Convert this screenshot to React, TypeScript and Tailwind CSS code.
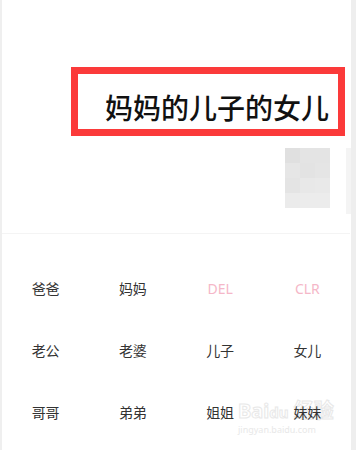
import React from 'react'

const KEYS: { label: string; accent?: boolean }[] = [
  { label: '爸爸' }, { label: '妈妈' }, { label: 'DEL', accent: true }, { label: 'CLR', accent: true },
  { label: '老公' }, { label: '老婆' }, { label: '儿子' }, { label: '女儿' },
  { label: '哥哥' }, { label: '弟弟' }, { label: '姐姐' }, { label: '妹妹' },
]

// blurred mosaic patch from the source screenshot
const MOSAIC = [
  '#e0e0e0', '#e4e4e4', '#e4e4e4',
  '#e6e6e6', '#e3e3e3', '#e5e5e5',
  '#e4e4e4', '#e8e8e8', '#e9e9e9',
  '#ebebeb', '#ececec', '#ececec',
]

export default function App() {
  return (
    <div
      className="flex w-[356px] h-[450px] bg-white overflow-hidden"
      style={{ fontFamily: '"Noto Sans", "Noto Sans CJK SC", sans-serif' }}
    >
      <div className="w-[2px] bg-[#efefef]" />
      <div className="flex-1 flex flex-col">
        {/* display */}
        <div className="h-[233px] pt-[67px] pl-[69px]">
          <div className="w-[274px] h-[69px] border-[7px] border-[#fb3a3a] flex items-end justify-end pr-[9px] pb-[1px]">
            <span className="text-[28px] leading-[40px] font-medium text-[#111]">妈妈的儿子的女儿</span>
          </div>
          <div className="flex mt-[12px] ml-[214px] items-start">
            <div className="grid grid-cols-3 w-[45px]">
              {MOSAIC.map((c, i) => (
                <div key={i} className="h-[15px]" style={{ backgroundColor: c }} />
              ))}
            </div>
            <div className="ml-[16px] w-[5px] h-[66px] bg-[#f4f4f4]" />
          </div>
        </div>
        <div className="h-px bg-[#f4f4f4] mr-[1px]" />

        {/* keypad */}
        <div className="relative grid grid-cols-4 pt-[23px]">
          <div className="absolute left-[236px] top-[166px] flex flex-col items-start pointer-events-none">
            <span className="text-[20px] leading-[22px] font-bold text-transparent [-webkit-text-stroke:1px_#e8e8e8]">Bai<span className="text-[15px]">du</span> 经验</span>
            <span className="text-[9px] leading-[12px] text-[#e8e8e8] mt-[1px]">jingyan.baidu.com</span>
          </div>
          {KEYS.map(k => (
            <div
              key={k.label}
              className={`relative h-[62px] flex items-center justify-center text-[14px] ${
                k.accent ? 'text-[#f5b7c8]' : 'text-[#333]'
              }`}
            >
              {k.label}
            </div>
          ))}
        </div>
      </div>
      <div className="w-[5px] bg-[#eeeeee]" />
    </div>
  )
}
